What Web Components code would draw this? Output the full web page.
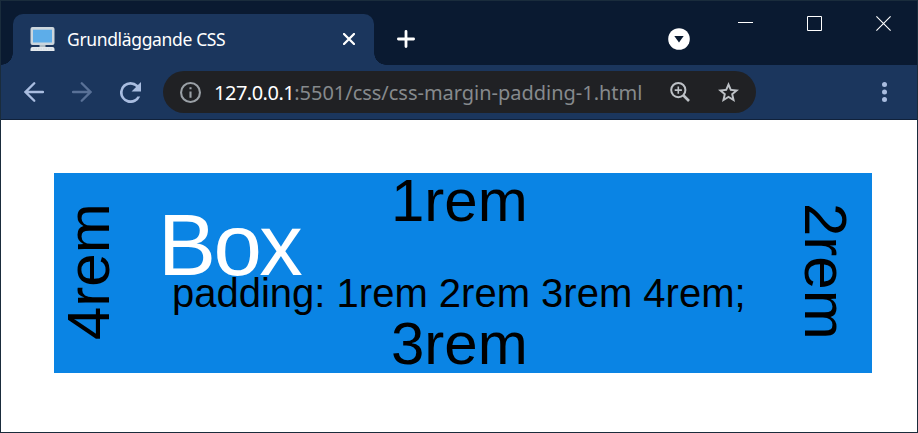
<!DOCTYPE html>
<html lang="sv">
<head>
<meta charset="utf-8">
<title>Grundläggande CSS</title>
<style>
html, body { margin: 0; height: 100%; }
body { overflow: hidden; font-family: "Noto Sans", "Open Sans", sans-serif; }
</style>
</head>
<body>
<browser-window>
  <tab-strip slot="tabs"><browser-tab>Grundläggande CSS</browser-tab></tab-strip>
  <tool-bar slot="toolbar"><address-bar><span slot="host">127.0.0.1</span>:5501/css/css-margin-padding-1.html</address-bar></tool-bar>
  <padding-box>
    <edge-label slot="top">1rem</edge-label>
    <edge-label slot="right" side="right">2rem</edge-label>
    <edge-label slot="bottom">3rem</edge-label>
    <edge-label slot="left" side="left">4rem</edge-label>
    <span slot="title">Box</span>
    padding: 1rem 2rem 3rem 4rem;
  </padding-box>
</browser-window>
<script>
const define = (name, html) => customElements.define(name, class extends HTMLElement {
  constructor() {
    super();
    this.attachShadow({ mode: 'open' }).innerHTML = html;
  }
});

const icons = {
  monitor: ['0 0 25 25', '<rect x=".5" y="0" width="24" height="18" rx="2" fill="#ccd6dd"/><rect x="3" y="2.7" width="19" height="12.8" fill="#5dade9"/><path d="M9.5 18h6v3h-6z" fill="#aebbc3"/><path d="M2.5 20h20a2 2 0 0 1 2 2v2H.5v-2a2 2 0 0 1 2-2z" fill="#e4e9ed"/><path d="M3 22h19" stroke="#ccd6dd" stroke-dasharray="1.5 1"/>'],
  close: ['0 0 12 12', '<path d="M1 1l10 10M11 1L1 11" fill="none" stroke="currentColor" stroke-width="2.3" stroke-linecap="round"/>'],
  plus: ['0 0 18 18', '<path d="M9 1.4v15.2M1.4 9h15.2" fill="none" stroke="currentColor" stroke-width="2.8" stroke-linecap="round"/>'],
  search: ['0 0 22 22', '<circle cx="11" cy="11" r="10.8" fill="#fff"/><path d="M6.3 8h9.4L11 14.4z" fill="#0a1a31"/>'],
  min: ['0 0 15 15', '<path d="M0 6.5h15" stroke="currentColor"/>'],
  max: ['0 0 15 15', '<path d="M.5.5h14v14H.5z" fill="none" stroke="currentColor"/>'],
  quit: ['0 0 15 15', '<path d="M.4.4l14.2 14.2M14.6.4L.4 14.6" stroke="currentColor" stroke-width="1.1"/>'],
  back: ['4 4 16 16', '<path d="M19.2 12H5.2M12.2 5L5.2 12l7 7" fill="none" stroke="currentColor" stroke-width="1.85" stroke-linecap="round"/>'],
  forward: ['4 4 16 16', '<path d="M4.8 12h14M11.8 5l7 7-7 7" fill="none" stroke="currentColor" stroke-width="1.85" stroke-linecap="round"/>'],
  reload: ['4 4 16 16', '<path fill="currentColor" d="M17.65 6.35A7.958 7.958 0 0 0 12 4a8 8 0 1 0 7.4 11h-2.2A6 6 0 1 1 12 6c1.66 0 3.14.69 4.22 1.78L12.8 11.2H20V4l-2.35 2.35z"/>'],
  info: ['2 2 20 20', '<path fill="currentColor" d="M11 7h2v2h-2zm0 4h2v6h-2zm1-9a10 10 0 1 0 0 20 10 10 0 0 0 0-20zm0 18a8 8 0 1 1 0-16 8 8 0 0 1 0 16z"/>'],
  zoom: ['0 0 20 20', '<g fill="none" stroke="currentColor"><circle cx="8.3" cy="8.1" r="7.1" stroke-width="2"/><path d="M13 13l6 6" stroke-width="2.7"/><path d="M8.3 4.5v7.2M4.7 8.1h7.2" stroke-width="1.6"/></g>'],
  star: ['2 2 20 19', '<path fill="currentColor" d="M22 9.24l-7.19-.62L12 2 9.19 8.63 2 9.24l5.46 4.73L5.82 21 12 17.27 18.18 21l-1.63-7.03L22 9.24zM12 15.1l-3.4 2.05.9-3.87-3-2.6 3.96-.34L12 6.7l1.54 3.64 3.96.34-3 2.6.9 3.87L12 15.1z"/>'],
  dots: ['0 0 6 21', '<g fill="currentColor"><circle cx="3.5" cy="2.6" r="2.5"/><circle cx="3.5" cy="10.1" r="2.5"/><circle cx="3.5" cy="17.6" r="2.5"/></g>']
};
customElements.define('ui-icon', class extends HTMLElement {
  constructor() { super(); this.attachShadow({ mode: 'open' }); }
  connectedCallback() {
    const [box, art] = icons[this.getAttribute('name')];
    this.shadowRoot.innerHTML = `<style>:host{display:block;flex:none}svg{display:block;width:100%;height:100%}</style><svg viewBox="${box}" aria-hidden="true">${art}</svg>`;
  }
});

define('browser-window', `<style>
  :host { display:flex; flex-direction:column; box-sizing:border-box; width:918px; height:433px; border:1px solid #1a2c3c; background:#fff; }
  main { display:flex; padding:53px 45px 0 53px; }
</style><slot name="tabs"></slot><slot name="toolbar"></slot><main><slot></slot></main>`);

define('tab-strip', `<style>
  :host { display:flex; align-items:flex-start; box-sizing:border-box; height:64px; padding:13px 0 0 12px; background:#0a1a31; color:#fff; }
  .plus { width:18px; height:18px; margin:16px 0 0 23px; }
  .search { width:22px; height:22px; margin:14px 0 0 253px; }
  .win { width:15px; height:15px; margin:2px 0 0 54px; }
  .first { margin-left:48px; }
</style><slot></slot><ui-icon class="plus" name="plus"></ui-icon><ui-icon class="search" name="search"></ui-icon>
<ui-icon class="win first" name="min"></ui-icon><ui-icon class="win" name="max"></ui-icon><ui-icon class="win" name="quit"></ui-icon>`);

define('browser-tab', `<style>
  :host { display:flex; position:relative; flex:none; box-sizing:border-box; width:361px; height:51px; padding:0 19px 0 17px; border-radius:10px 10px 0 0; background:#1b365d; color:#fff; font-size:17.5px; }
  :host::before, :host::after { content:""; position:absolute; bottom:0; width:12px; height:12px; }
  :host::before { right:100%; background:radial-gradient(circle at 0 0, transparent 11.5px, #1b365d 12px); }
  :host::after { left:100%; background:radial-gradient(circle at 100% 0, transparent 11.5px, #1b365d 12px); }
  .fav { width:25px; height:25px; margin-top:13px; }
  .label { flex:1; margin:13px 0 0 12px; line-height:24px; white-space:nowrap; letter-spacing:-.35px; }
  .close { width:12px; height:12px; margin-top:19px; }
</style><ui-icon class="fav" name="monitor"></ui-icon><span class="label"><slot></slot></span><ui-icon class="close" name="close"></ui-icon>`);

define('tool-bar', `<style>
  :host { display:flex; align-items:center; box-sizing:border-box; height:55px; padding-left:23px; border-bottom:1px solid #10213a; background:#1b365d; color:#a9bde0; }
  .nav { width:20px; height:20px; }
  .fwd { margin-left:28px; color:#597197; }
  .reload { width:21px; height:21px; margin:0 22px 0 28px; }
  .dots { width:6px; height:21px; margin-left:125px; }
</style><ui-icon class="nav" name="back"></ui-icon><ui-icon class="nav fwd" name="forward"></ui-icon><ui-icon class="reload" name="reload"></ui-icon><slot></slot><ui-icon class="dots" name="dots"></ui-icon>`);

define('address-bar', `<style>
  :host { display:flex; align-items:center; flex:none; box-sizing:border-box; width:593px; height:42px; padding:0 17px; border-radius:21px; background:#202124; color:#868a8d; font-size:20px; }
  .url { flex:1; margin:2px 0 0 13px; line-height:28px; letter-spacing:-.02px; white-space:nowrap; }
  ::slotted(span) { color:#fff; letter-spacing:-.5px; }
  .info { width:21px; height:21px; color:#9aa0a6; }
  .zoom { width:20px; height:20px; margin-right:28px; color:#bdc1c6; }
  .star { width:21px; height:20px; color:#bdc1c6; }
</style><ui-icon class="info" name="info"></ui-icon><span class="url"><slot name="host"></slot><slot></slot></span><ui-icon class="zoom" name="zoom"></ui-icon><ui-icon class="star" name="star"></ui-icon>`);

define('padding-box', `<style>
  :host { display:grid; grid-template-columns:70px 654px 94px; width:818px; height:200px; background:#0a84e4; color:#000; font-family:"Liberation Sans",Arial,sans-serif; white-space:nowrap; }
  .mid { display:flex; flex-direction:column; }
  .mid > * { flex:none; }
  .top { line-height:56px; padding-left:267px; }
  .title { line-height:32px; padding-left:34px; color:#fff; font-size:87px; letter-spacing:-2.6px; }
  .rule { line-height:64px; padding-left:48px; font-size:40px; white-space:normal; }
  .bottom { line-height:38px; padding-left:267px; }
</style>
<slot name="left"></slot>
<div class="mid"><div class="top"><slot name="top"></slot></div><div class="title"><slot name="title"></slot></div><div class="rule"><slot></slot></div><div class="bottom"><slot name="bottom"></slot></div></div>
<slot name="right"></slot>`);

define('edge-label', `<style>
  :host { display:block; font-size:60px; }
  :host([side]) { display:flex; box-sizing:border-box; height:200px; writing-mode:vertical-rl; }
  :host([side="right"]) { line-height:94px; padding-top:30px; }
  :host([side="left"]) { line-height:70px; padding-top:33px; transform:rotate(180deg); }
</style><slot></slot>`);
</script>
</body>
</html>
